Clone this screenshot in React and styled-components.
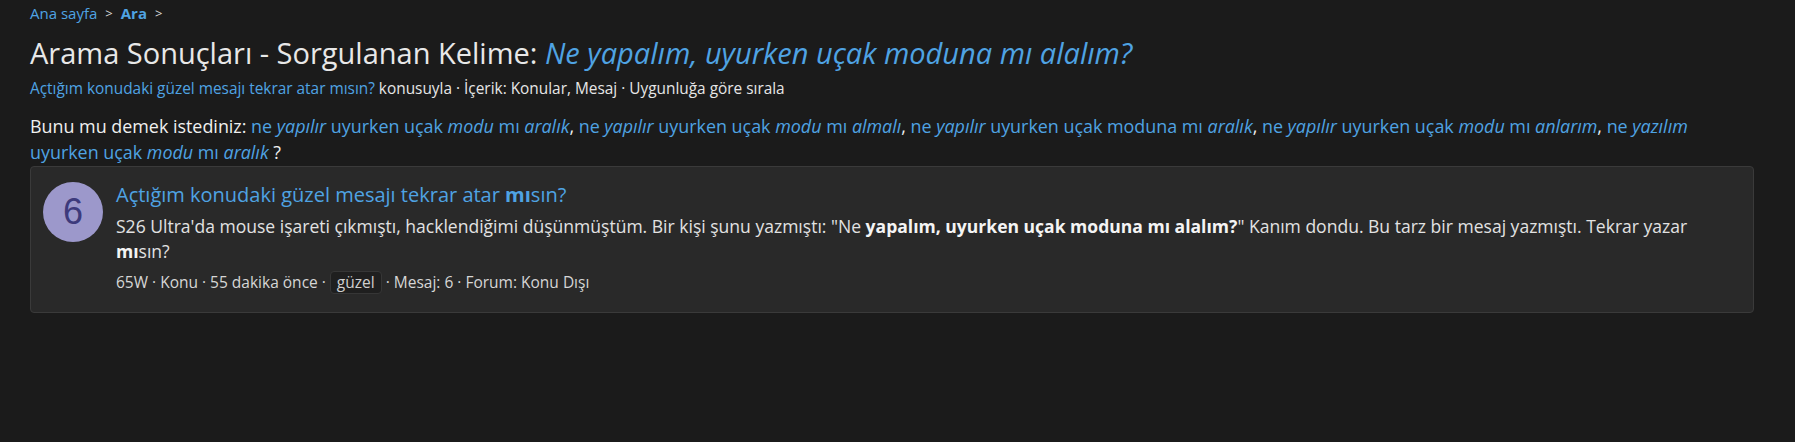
import React from 'react';
import styled, { createGlobalStyle } from 'styled-components';

const GlobalStyle = createGlobalStyle`
  html, body {
    margin: 0;
    background: #1b1b1b;
  }
  body {
    font-family: 'Open Sans', 'Noto Sans', sans-serif;
    color: #e6e6e6;
  }
`;

const Page = styled.main`
  padding: 3px 41px 40px 30px;
`;

const Crumbs = styled.nav`
  display: flex;
  align-items: center;
  gap: 8px;
  font-size: 15px;
  line-height: 20px;
  a {
    color: #4fa3e3;
    text-decoration: none;
  }
  b {
    color: #4fa3e3;
    font-weight: 700;
  }
`;

const Chevron = styled.span`
  color: #d8d8d8;
  font-size: 13px;
`;

const Title = styled.h1`
  margin: 12px 0 0;
  font-size: 29px;
  line-height: 36px;
  font-weight: 400;
  color: #e8e8e8;
  em {
    color: #4fa3e3;
  }
`;

const Sub = styled.div`
  margin-top: 8px;
  font-size: 15.4px;
  line-height: 20px;
  color: #e6e6e6;
  a {
    color: #4fa3e3;
    text-decoration: none;
  }
`;

const Suggest = styled.p`
  margin: 14px 0 0;
  font-size: 17.9px;
  line-height: 26px;
  color: #f0f0f0;
  a {
    color: #4fa3e3;
    text-decoration: none;
  }
`;

const Card = styled.article`
  margin-top: 1px;
  display: flex;
  gap: 13px;
  padding: 15px 12px 18px;
  background: #292929;
  border: 1px solid #3a3a3a;
  border-radius: 4px;
`;

const Avatar = styled.div`
  flex: 0 0 60px;
  height: 60px;
  border-radius: 50%;
  background: #9c98cb;
  color: #3d3a7c;
  display: flex;
  align-items: center;
  justify-content: center;
  font-family: 'Liberation Sans', Arial, sans-serif;
  font-size: 36px;
`;

const Body = styled.div`
  flex: 1;
  min-width: 0;
`;

const CardTitle = styled.h3`
  margin: 0;
  font-size: 20px;
  line-height: 26px;
  font-weight: 400;
  color: #4fa3e3;
  b {
    font-weight: 700;
  }
`;

const Snippet = styled.p`
  margin: 6px 0 0;
  font-size: 17.55px;
  line-height: 25px;
  color: #e2e2e2;
  b {
    color: #f4f4f4;
  }
`;

const Meta = styled.div`
  margin-top: 6px;
  display: flex;
  align-items: center;
  gap: 4px;
  font-size: 15.5px;
  line-height: 24px;
  color: #d6d6d6;
`;

const Tag = styled.span`
  padding: 0 6px;
  line-height: 21px;
  background: #1f1f1f;
  border: 1px solid #363636;
  border-radius: 4px;
  color: #cfcfcf;
`;

const suggestions = [
  [['ne', 0], ['yapılır', 1], ['uyurken uçak', 0], ['modu', 1], ['mı', 0], ['aralık', 1]],
  [['ne', 0], ['yapılır', 1], ['uyurken uçak', 0], ['modu', 1], ['mı', 0], ['almalı', 1]],
  [['ne', 0], ['yapılır', 1], ['uyurken uçak moduna mı', 0], ['aralık', 1]],
  [['ne', 0], ['yapılır', 1], ['uyurken uçak', 0], ['modu', 1], ['mı', 0], ['anlarım', 1]],
  [['ne', 0], ['yazılım', 1], ['\nuyurken uçak', 0], ['modu', 1], ['mı', 0], ['aralık', 1]],
];

const Words = ({ words }) =>
  words.map(([w, it], i) => {
    const text = w.startsWith('\n') ? w.slice(1) : w;
    return (
      <React.Fragment key={i}>
        {i > 0 && (w.startsWith('\n') ? <br /> : ' ')}
        {it ? <i>{text}</i> : text}
      </React.Fragment>
    );
  });

const App = () => (
  <>
    <GlobalStyle />
    <Page>
      <Crumbs>
        <a href='#'>Ana sayfa</a>
        <Chevron>&gt;</Chevron>
        <b>Ara</b>
        <Chevron>&gt;</Chevron>
      </Crumbs>
      <Title>
        Arama Sonuçları - Sorgulanan Kelime: <em>Ne yapalım, uyurken uçak moduna mı alalım?</em>
      </Title>
      <Sub>
        <a href='#'>Açtığım konudaki güzel mesajı tekrar atar mısın?</a> konusuyla · İçerik: Konular,
        Mesaj · Uygunluğa göre sırala
      </Sub>
      <Suggest>
        Bunu mu demek istediniz:{' '}
        {suggestions.map((s, i) => (
          <React.Fragment key={i}>
            {i > 0 && ', '}
            <a href='#'>
              <Words words={s} />
            </a>
          </React.Fragment>
        ))}{' '}
        ?
      </Suggest>
      <Card>
        <Avatar>6</Avatar>
        <Body>
          <CardTitle>
            Açtığım konudaki güzel mesajı tekrar atar <b>mı</b>sın?
          </CardTitle>
          <Snippet>
            S26 Ultra'da mouse işareti çıkmıştı, hacklendiğimi düşünmüştüm. Bir kişi şunu yazmıştı: "Ne{' '}
            <b>yapalım, uyurken uçak moduna mı alalım?</b>" Kanım dondu. Bu tarz bir mesaj yazmıştı. Tekrar
            yazar
            <br />
            <b>mı</b>sın?
          </Snippet>
          <Meta>
            65W · Konu · 55 dakika önce · <Tag>güzel</Tag> · Mesaj: 6 · Forum: Konu Dışı
          </Meta>
        </Body>
      </Card>
    </Page>
  </>
);

export default App;
